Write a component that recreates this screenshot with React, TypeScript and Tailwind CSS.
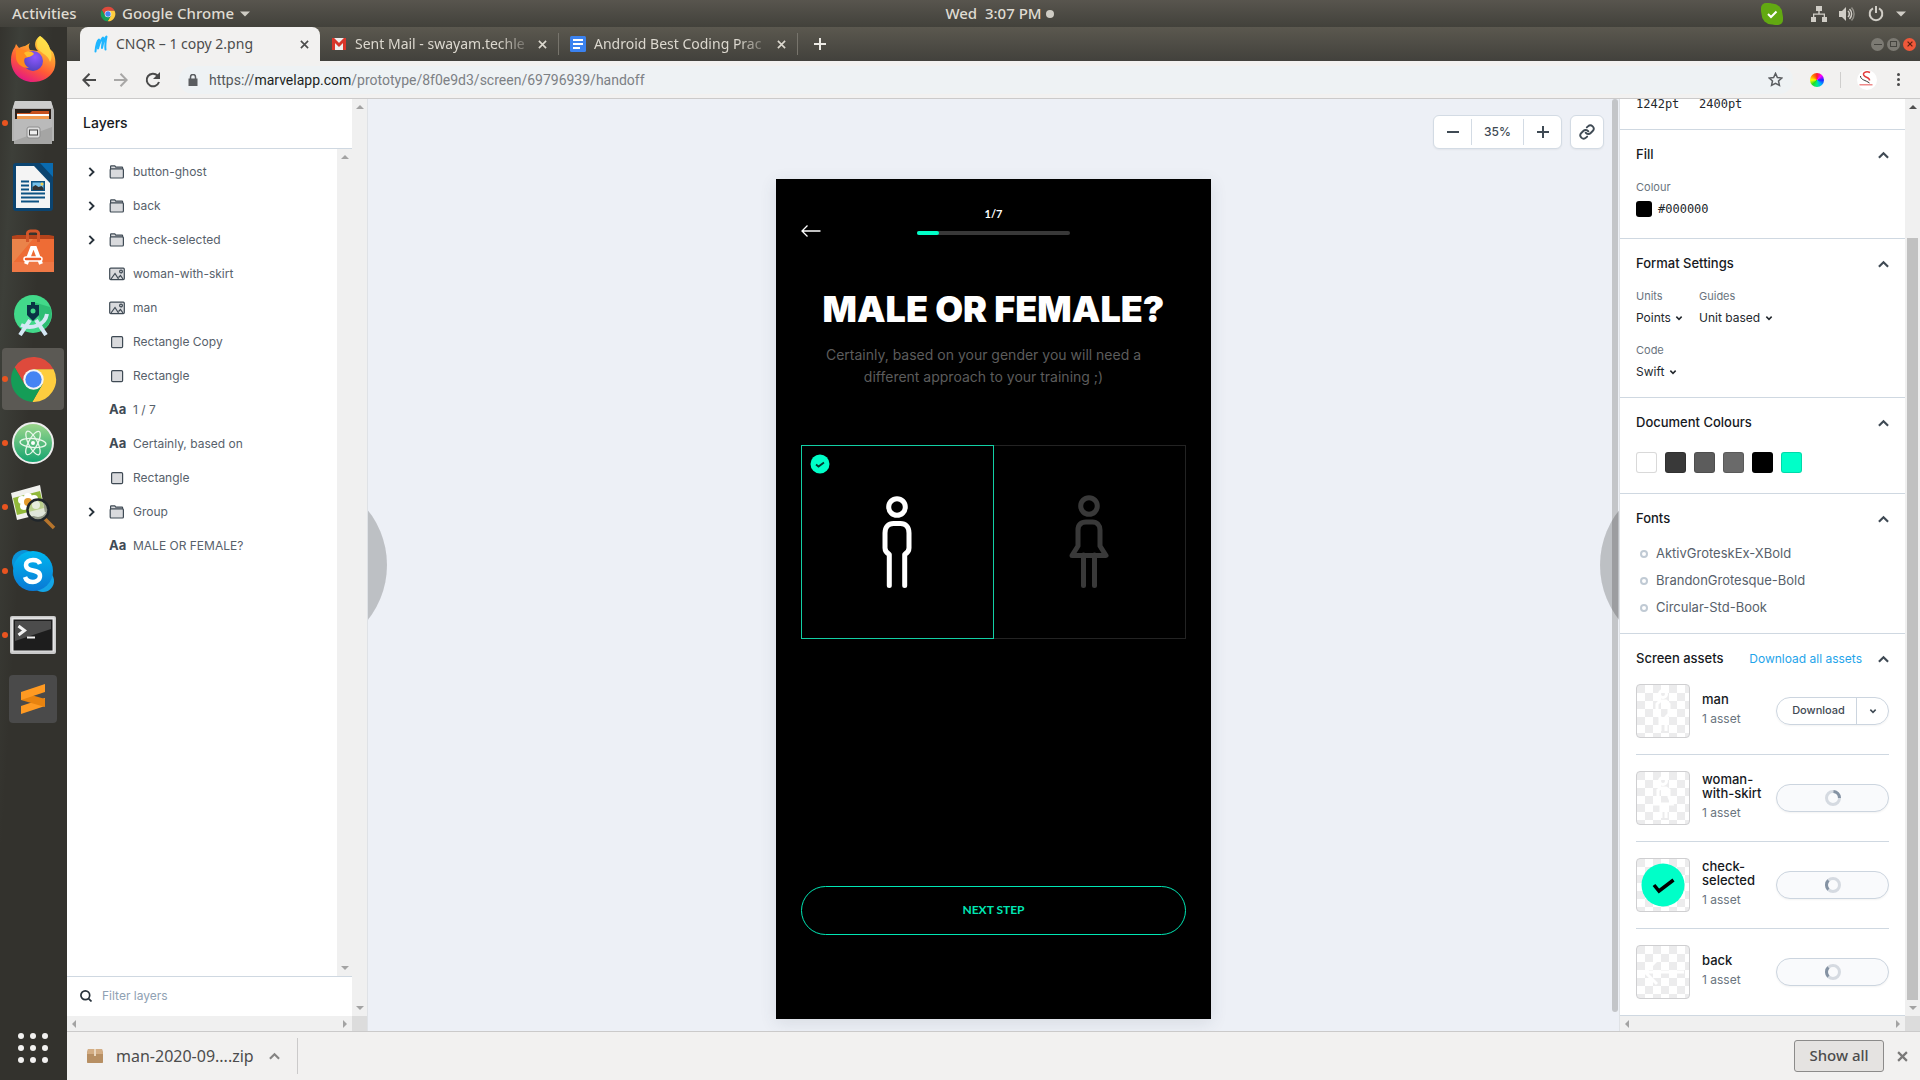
import React from "react";

type Kids = { children?: React.ReactNode; className?: string };

/* ---------- shared icons ---------- */

function ChromeLogo({ className }: { className: string }) {
  return (
    <svg viewBox="0 0 48 48" className={className} aria-hidden="true">
      <path d="M5.54 12.03A22 22 0 0 1 43.6 14H24L15.34 29Z" fill="#de4a3c" />
      <path d="M43.6 14A22 22 0 0 1 22.86 45.97L32.66 29 24 14Z" fill="#fecd3f" />
      <path d="M22.86 45.97A22 22 0 0 1 5.54 12.03L15.34 29H32.66Z" fill="#159d57" />
      <circle cx="24" cy="24" r="10" fill="#f4f4f4" />
      <circle cx="24" cy="24" r="8" fill="#4484f3" />
    </svg>
  );
}

function Cross({ className, width = 2 }: { className: string; width?: number }) {
  return (
    <svg viewBox="0 0 10 10" className={className} fill="none" stroke="currentColor" strokeWidth={width} aria-hidden="true">
      <path d="M1 1l8 8M9 1L1 9" />
    </svg>
  );
}

function Chevron({ dir, className }: { dir: "up" | "down" | "right"; className: string }) {
  const d = dir === "up" ? "M1 8.500L6 3.500l5 5" : dir === "down" ? "M2 4l4 4 4-4" : "M4 1l5 5-5 5";
  return (
    <svg viewBox="0 0 12 12" className={className} fill="none" stroke="currentColor" strokeWidth="2.300" aria-hidden="true">
      <path d={d} />
    </svg>
  );
}

function Caret({ dir, className }: { dir: "up" | "down" | "left" | "right"; className: string }) {
  const d = { up: "M0 6L4 2l4 4z", down: "M0 2l4 4 4-4z", left: "M6 0L2 4l4 4z", right: "M2 0l4 4-4 4z" }[dir];
  return (
    <svg viewBox="0 0 8 8" className={className} fill="currentColor" aria-hidden="true">
      <path d={d} />
    </svg>
  );
}

/* ---------- desktop top bar ---------- */

function TopBar() {
  return (
    <header className="grid h-[27px] shrink-0 grid-cols-[67px_1fr_auto_1fr] items-center bg-linear-to-b from-[#58554e] to-[#42413b] text-[15px] font-medium text-[#dfdbd2]">
      <div className="col-span-2 flex items-center pl-3">
        <button className="w-[88px] text-left">Activities</button>
        <button className="flex items-center gap-[6px]">
          <ChromeLogo className="size-[16px]" />
          <span>Google Chrome</span>
          <Caret dir="down" className="size-[10px] text-[#cfccc4]" />
        </button>
      </div>
      <button className="flex items-center gap-1 pl-3 whitespace-pre">
        Wed  3:07 PM
        <span className="size-2 rounded-full bg-[#cfccc4]" />
      </button>
      <div className="flex items-center justify-end pr-[14px] text-[#d0cdc6]">
        <svg viewBox="0 0 22 22" className="mr-[28px] size-[22px]" aria-hidden="true">
          <rect x="0" y="0" width="13" height="13" rx="5" fill="#62a912" />
          <rect x="9" y="9" width="13" height="13" rx="5" fill="#62a912" />
          <circle cx="11" cy="11" r="10.500" fill="#62a912" />
          <path d="M7 11l3 3 5.500-5.500" fill="none" stroke="#fff" strokeWidth="2" />
        </svg>
        <svg viewBox="0 0 16 16" className="mr-[12px] size-4" fill="currentColor" aria-hidden="true">
          <path d="M5 0h6v5H8.700v2.500H14V11h2v5h-5v-5h1.700V8.800H3.300V11H5v5H0v-5h2V7.500h5.300V5H5z" />
        </svg>
        <svg viewBox="0 0 16 16" className="mr-[13px] size-4" fill="none" stroke="currentColor" aria-hidden="true">
          <path d="M0 5h3l4-4v14l-4-4H0z" fill="currentColor" stroke="none" />
          <path d="M9 5a4 4 0 0 1 0 6M10.500 3a7 7 0 0 1 0 10" strokeWidth="1.500" />
          <path d="M12.500 1.500a9.500 9.500 0 0 1 0 13" strokeWidth="1.500" opacity="0.500" />
        </svg>
        <svg viewBox="0 0 16 16" className="mr-[12px] size-4" fill="none" stroke="currentColor" strokeWidth="2" aria-hidden="true">
          <path d="M5 2.300a6.300 6.300 0 1 0 6 0M8 0v7" />
        </svg>
        <Caret dir="down" className="size-[10px]" />
      </div>
    </header>
  );
}

/* ---------- dock ---------- */

const dockIcons: { name: string; running: boolean; active?: boolean; art: React.ReactNode }[] = [
  {
    name: "Firefox",
    running: false,
    art: (
      <svg viewBox="0 0 46 46" className="size-[46px]">
        <defs>
          <linearGradient id="ffo" x1="0.8" y1="0" x2="0.3" y2="1">
            <stop offset="0" stopColor="#fff44f" />
            <stop offset="0.35" stopColor="#ffa030" />
            <stop offset="0.65" stopColor="#ff5a36" />
            <stop offset="1" stopColor="#e31587" />
          </linearGradient>
          <radialGradient id="ffp" cx="0.6" cy="0.3" r="0.8">
            <stop offset="0" stopColor="#9059ff" />
            <stop offset="1" stopColor="#4a3fb8" />
          </radialGradient>
        </defs>
        <path d="M30 0c6 4 9 9 10 13l3 3c3 6 3 13 1 18-4 8-12 12-21 12C10 46 1 36 1 24c0-5 1-9 4-13l1-3 3 4c2-1 4-2 6-2l5-3c-2 3-1 5 0 7l8 1c-5-5-3-12 2-15z" fill="url(#ffo)" />
        <circle cx="23" cy="25" r="10" fill="url(#ffp)" />
        <path d="M6 14c5-1 9 0 12 2l5 2c-2 3-5 3-8 4-2 3 0 8 4 10-8 0-13-5-13-11z" fill="#ff8a1f" />
        <path d="M14 17c3-2 8-2 10 1-2 2-4 3-7 3z" fill="#ffbd2e" />
        <path d="M30 0c6 4 9 9 10 13 2 5 2 10 0 13-2-9-13-9-13-17 0-4 1-7 3-9z" fill="#ffe14a" opacity="0.8" />
      </svg>
    ),
  },
  {
    name: "Files",
    running: true,
    art: (
      <svg viewBox="0 0 42 44" className="h-[44px] w-[42px]">
        <path d="M3 0h36l3 9v31H0V9z" fill="#b4b4b3" />
        <path d="M3 0h36l2 7H1z" fill="#cdcdcc" />
        <path d="M3 8h36v10H3z" fill="#2c211b" />
        <path d="M5 12h13l2-2h17v9H5z" fill="#c7501d" />
        <path d="M5 13h32v6H5z" fill="#fff" />
        <path d="M5 15h32v4H5z" fill="#f39a4e" />
        <path d="M2 18h38v25H2z" fill="#a5a5a4" />
        <path d="M2 18h38v8L2 40z" fill="#bababa" />
        <rect x="15" y="26" width="13" height="11" rx="2" fill="#dcdcdc" stroke="#8e8e8e" />
        <rect x="17.500" y="29" width="8" height="5" fill="#eee" stroke="#444" />
      </svg>
    ),
  },
  {
    name: "LibreOffice Writer",
    running: false,
    art: (
      <svg viewBox="0 0 40 48" className="h-[48px] w-[40px]">
        <path d="M3 0h37v45a3 3 0 0 1-3 3H3a3 3 0 0 1-3-3V3a3 3 0 0 1 3-3z" fill="#0b4470" />
        <path d="M27 0h13v14z" fill="#0a6bb0" />
        <path d="M3 3h18l16 17v25H3z" fill="#f4f4f4" />
        <path d="M8 18.500h8M8 22.500h8M8 26.500h8M8 30.500h24M8 34.500h24M8 38.500h18" stroke="#0d5384" strokeWidth="2" />
        <path d="M18 18h14v10H18z" fill="#0d5384" />
        <path d="M19.500 19.500h11v7h-11z" fill="#74c0ea" />
        <path d="M19.500 27v-3l3-2 3 2 3-1 2 2v2z" fill="#333" />
        <circle cx="29" cy="21" r="1.500" fill="#f5cf4f" />
      </svg>
    ),
  },
  {
    name: "Ubuntu Software",
    running: false,
    art: (
      <svg viewBox="0 0 42 44" className="h-[44px] w-[42px]">
        <path d="M0 7l5-1h32l5 1v4H0z" fill="#b5431b" />
        <path d="M0 10h42v33H0z" fill="#ee6c35" />
        <path d="M0 10h21L0 35z" fill="#e98a50" opacity="0.8" />
        <path d="M0 33h42v10H0z" fill="#f08050" opacity="0.6" />
        <path d="M15.500 13V6a3 3 0 0 1 3-4h5a3 3 0 0 1 3 4v7" fill="none" stroke="#d3562a" strokeWidth="3" />
        <path d="M14 35l6-16h3l6 16" fill="none" stroke="#fff" strokeWidth="4" />
        <rect x="12" y="28" width="18" height="4" rx="2" fill="#ee5a28" stroke="#fff" strokeWidth="1.500" />
      </svg>
    ),
  },
  {
    name: "Android Studio",
    running: false,
    art: (
      <svg viewBox="0 0 42 42" className="size-[42px]">
        <circle cx="21" cy="20" r="19" fill="#42d98a" />
        <path d="M21 8l17 5a19 19 0 0 1-6 22z" fill="#2ebd74" />
        <path d="M18 26L8 41M24 26l10 15" stroke="#d5e8f5" strokeWidth="4" />
        <path d="M9 31c11 5 24 0 26-11" fill="none" stroke="#d5e8f5" strokeWidth="4" />
        <path d="M19 8h4v3h4v10l-6 6-6-6V11h4z" fill="#0a3345" />
        <circle cx="21" cy="17" r="2.500" fill="#42d98a" />
      </svg>
    ),
  },
  { name: "Google Chrome", running: true, active: true, art: <ChromeLogo className="size-[49px]" /> },
  {
    name: "Atom",
    running: true,
    art: (
      <svg viewBox="0 0 42 42" className="size-[42px]">
        <defs>
          <linearGradient id="atm" x1="0" y1="0" x2="0" y2="1">
            <stop offset="0" stopColor="#9fd78c" />
            <stop offset="1" stopColor="#12a36f" />
          </linearGradient>
        </defs>
        <circle cx="21" cy="21" r="20" fill="url(#atm)" stroke="#ededed" strokeWidth="2" />
        <g fill="none" stroke="#e8f7ea" strokeWidth="1.300">
          <ellipse cx="21" cy="21" rx="13" ry="4.500" transform="rotate(5 21 21)" />
          <ellipse cx="21" cy="21" rx="13" ry="4.500" transform="rotate(63 21 21)" />
          <ellipse cx="21" cy="21" rx="13" ry="4.500" transform="rotate(118 21 21)" />
        </g>
        <circle cx="21" cy="21" r="2" fill="#fff" />
      </svg>
    ),
  },
  {
    name: "Image Viewer",
    running: true,
    art: (
      <svg viewBox="0 0 46 46" className="size-[46px]">
        <path d="M1 9L30 1l5 28L7 36z" fill="#f1f1ee" />
        <path d="M3 14l27-7 4 17-27 7z" fill="#91b83a" />
        <g fill="#fff">
          <circle cx="12" cy="16" r="4" /><circle cx="18" cy="13" r="4" /><circle cx="24" cy="15" r="4" />
          <circle cx="26" cy="21" r="4" /><circle cx="14" cy="22" r="4" />
        </g>
        <circle cx="18" cy="18" r="4" fill="#e2992c" />
        <path d="M34 34l10 10" stroke="#b7752c" strokeWidth="3.500" />
        <circle cx="28" cy="26" r="10.500" fill="#d6dfc4" fillOpacity="0.6" stroke="#20262b" strokeWidth="2.500" />
        <path d="M20 28a9 9 0 0 0 16 0z" fill="#dfe5da" />
      </svg>
    ),
  },
  {
    name: "Skype",
    running: true,
    art: (
      <svg viewBox="0 0 42 42" className="size-[42px]">
        <defs>
          <linearGradient id="sky" x1="0" y1="0" x2="0" y2="1">
            <stop offset="0" stopColor="#00b7f0" />
            <stop offset="1" stopColor="#0a78d4" />
          </linearGradient>
        </defs>
        <circle cx="12" cy="12" r="12" fill="#0a93d8" />
        <circle cx="31" cy="31" r="11" fill="#14a5e6" />
        <circle cx="21" cy="21" r="20" fill="url(#sky)" />
        <path d="M28 14c-1-3-4-4-7-4-4 0-7 2-7 5 0 8 14 3 14 11 0 4-4 6-7 6-4 0-7-2-8-5" fill="none" stroke="#fff" strokeWidth="4.500" />
      </svg>
    ),
  },
  {
    name: "Terminal",
    running: true,
    art: (
      <svg viewBox="0 0 46 38" className="h-[38px] w-[46px]">
        <rect width="46" height="38" rx="2" fill="#c9c9c9" />
        <rect x="1.500" y="1.500" width="43" height="34" fill="#e6e6e6" />
        <rect x="3.500" y="3.500" width="39" height="31" fill="#1d1d1d" />
        <path d="M5 5h36v8L5 25z" fill="#4c4c4c" />
        <path d="M8.500 10l6 4.500-6 4.500" fill="none" stroke="#f2f2f2" strokeWidth="3" />
        <path d="M17 21.500h8" stroke="#f2f2f2" strokeWidth="2" />
      </svg>
    ),
  },
  {
    name: "Sublime Text",
    running: false,
    art: (
      <svg viewBox="0 0 48 48" className="size-[48px]">
        <rect width="48" height="48" rx="4" fill="#4a4a4a" />
        <path d="M12 31l24-8v8l-24 8z" fill="#ff9a22" />
        <path d="M12 17v8l24 7v-8z" fill="#e8830f" />
        <path d="M12 17l24-8v8l-24 8z" fill="#ff9a22" />
      </svg>
    ),
  },
];

function Dock() {
  return (
    <nav aria-label="Dock" className="flex w-[67px] shrink-0 flex-col justify-between bg-linear-to-br from-[#34332e] via-[#3d3f39] via-15% to-[#33322d] to-40% pt-px">
      <ul className="flex flex-col gap-[2px]">
        {dockIcons.map((i) => (
          <li key={i.name} className="relative flex justify-center pr-px">
            {i.running && <span className="absolute top-[28px] left-[2px] size-[6px] rounded-full bg-[#e95420]" />}
            <button aria-label={i.name} className={i.active ? "flex size-[62px] items-center justify-center rounded bg-[#5b5954]" : "flex size-[62px] items-center justify-center"}>
              {i.art}
            </button>
          </li>
        ))}
      </ul>
      <button aria-label="Show applications" className="mr-px mb-[17px] grid grid-cols-3 gap-[6px] self-center">
        {Array.from({ length: 9 }, (_, k) => (
          <span key={k} className="size-[6px] rounded-full bg-[#f2f1f0]" />
        ))}
      </button>
    </nav>
  );
}

/* ---------- browser chrome ---------- */

function TabStrip() {
  return (
    <div className="flex h-[34px] shrink-0 items-center bg-linear-to-b from-[#5b584f] to-[#42413c] pl-[13px] text-sm text-[#dcd8cf]">
      <div className="flex h-full w-[240px] items-center rounded-t-lg bg-[#f2f1f0] pr-2 pl-[14px] text-[#4c4c4c]">
        <svg viewBox="0 0 14 18" className="mr-2 h-[18px] w-[14px]" fill="none" stroke="#1fb6ff" strokeWidth="2" strokeLinecap="round" strokeLinejoin="round" aria-hidden="true">
          <path d="M1.500 16.500C2 11 3 6 5 4.500c0 3-1 6-1 9C5 10 7 4 9 2.500c0 4-1 7-1 10.500C9 8 10.500 3 12.500 1.500c-1 5-1.500 9-1 13" />
        </svg>
        <span className="flex-1 whitespace-nowrap">CNQR – 1 copy 2.png</span>
        <button aria-label="Close tab" className="p-[3px]"><Cross className="size-[9px]" width={1.8} /></button>
      </div>
      <div className="flex w-[239px] items-center border-r border-[#77746c] py-[1px] pr-2 pl-3">
        <svg viewBox="0 0 14 12" className="mr-[9px] h-3 w-[14px]" aria-hidden="true">
          <path d="M0 0h14v12H0z" fill="#eee" />
          <path d="M1.500 12V1.500L7 7l5.500-5.500V12" fill="none" stroke="#d8352a" strokeWidth="3" />
        </svg>
        <span className="flex-1 whitespace-nowrap mask-r-from-80%">Sent Mail - swayam.techle</span>
        <button aria-label="Close tab" className="p-[3px]"><Cross className="size-[9px]" width={1.8} /></button>
      </div>
      <div className="flex w-[239px] items-center border-r border-[#77746c] py-[1px] pr-2 pl-[11px]">
        <svg viewBox="0 0 16 16" className="mr-2 size-4" aria-hidden="true">
          <rect width="16" height="16" rx="1.500" fill="#3b82f0" />
          <path d="M3 4h10M3 8h10M3 12h7" stroke="#fff" strokeWidth="2" />
        </svg>
        <span className="flex-1 whitespace-nowrap mask-r-from-80%">Android Best Coding Prac</span>
        <button aria-label="Close tab" className="p-[3px]"><Cross className="size-[9px]" width={1.8} /></button>
      </div>
      <button aria-label="New tab" className="ml-4">
        <svg viewBox="0 0 12 12" className="size-3" stroke="#eceae5" strokeWidth="2" aria-hidden="true"><path d="M6 0v12M0 6h12" /></svg>
      </button>
      <div className="ml-auto flex gap-[3px] pr-1">
        <button aria-label="Minimise" className="flex size-[13px] items-center justify-center rounded-full bg-[#7c7a73]">
          <span className="h-px w-2 bg-[#45443f]" />
        </button>
        <button aria-label="Maximise" className="flex size-[13px] items-center justify-center rounded-full bg-[#7c7a73]">
          <span className="h-[6px] w-[7px] border border-[#45443f]" />
        </button>
        <button aria-label="Close window" className="flex size-[13px] items-center justify-center rounded-full bg-[#f0583a] text-[#5a2012]">
          <Cross className="size-[6px]" width={2} />
        </button>
      </div>
    </div>
  );
}

function Toolbar() {
  return (
    <div className="flex h-[38px] shrink-0 items-center border-b border-[#cbcaca] bg-[#f2f1f0] pr-5 pl-[15px] text-[#4a4a4a]">
      <button aria-label="Back" className="mr-[18px]">
        <svg viewBox="0 0 14 14" className="size-[14px]" fill="none" stroke="currentColor" strokeWidth="2"><path d="M14 7H1.500M7.500 .8L1.300 7l6.200 6.200" /></svg>
      </button>
      <button aria-label="Forward" className="mr-[17px] text-[#a8a7a6]">
        <svg viewBox="0 0 14 14" className="size-[14px]" fill="none" stroke="currentColor" strokeWidth="2"><path d="M0 7h12.500M6.500 .8L12.700 7l-6.200 6.200" /></svg>
      </button>
      <button aria-label="Reload">
        <svg viewBox="0 0 16 16" className="size-[16px]" fill="none" stroke="currentColor" strokeWidth="2">
          <path d="M14 10a6.300 6.300 0 1 1-1.500-6.500" />
          <path d="M15 0v7H8z" fill="currentColor" stroke="none" />
        </svg>
      </button>
      <div className="ml-[18px] flex h-[28px] flex-1 items-center rounded-full bg-[#eef2f4] pr-[10px] pl-[9px] font-['Roboto',sans-serif] text-sm">
        <svg viewBox="0 0 10 12" className="mr-[11px] h-3 w-[10px] text-[#5a5d60]" aria-hidden="true">
          <path d="M0.500 4.500h9V12h-9z" fill="currentColor" />
          <path d="M2.500 5V3a2.500 2.500 0 0 1 5 0v2" fill="none" stroke="currentColor" strokeWidth="1.500" />
        </svg>
        <a href="#address" className="flex-1 text-[#7c8084]">
          <span className="text-[#55585b]">https://</span><span className="text-[#1c1f22]">marvelapp.com</span>/prototype/8f0e9d3/screen/69796939/handoff
        </a>
        <button aria-label="Bookmark">
          <svg viewBox="0 0 16 16" className="size-[15px]" fill="none" stroke="#5a5d60" strokeWidth="1.600"><path d="M8 1.500l2 4.400 4.700.5-3.500 3.200 1 4.700L8 12l-4.200 2.300 1-4.700L1.300 6.400 6 5.900z" /></svg>
        </button>
      </div>
      <button aria-label="Colour picker extension" className="ml-[17px] size-[14px] rounded-full bg-[conic-gradient(#f22,#f0f,#22f,#0af,#0e8,#2d2,#ff0,#f80,#f22)]" />
      <span className="mx-[16px] h-4 w-px bg-[#cfcecd]" />
      <button aria-label="Profile" className="size-5 overflow-hidden rounded-full bg-white">
        <svg viewBox="0 0 20 20" className="size-5" fill="none">
          <path d="M13 2.500C9 .5 5 3 7 5.500s6 2 5.500 5" stroke="#e33b3b" strokeWidth="1.500" />
          <path d="M3.500 6c0 4 5 4 9 7" stroke="#333" strokeWidth="1" />
          <path d="M2.500 14.800h13" stroke="#ee8a8a" strokeWidth="1.500" />
        </svg>
      </button>
      <button aria-label="Menu" className="ml-5 flex flex-col gap-[2px]">
        <span className="size-[3px] rounded-full bg-[#4a4a4a]" />
        <span className="size-[3px] rounded-full bg-[#4a4a4a]" />
        <span className="size-[3px] rounded-full bg-[#4a4a4a]" />
      </button>
    </div>
  );
}

/* ---------- scroll bars ---------- */

function VBar() {
  return (
    <div aria-hidden="true" className="flex w-[15px] shrink-0 flex-col items-center justify-between bg-[#f0f0f0] py-1 text-[#a3a3a3]">
      <Caret dir="up" className="size-2" />
      <Caret dir="down" className="size-2" />
    </div>
  );
}

function HBar() {
  return (
    <div aria-hidden="true" className="flex h-[15px] shrink-0 bg-[#f0f0f0] text-[#a3a3a3]">
      <div className="flex flex-1 items-center justify-between px-[3px]">
        <Caret dir="left" className="size-2" />
        <Caret dir="right" className="size-2" />
      </div>
      <div className="w-[15px] bg-[#dcdcdc]" />
    </div>
  );
}

/* ---------- layers panel ---------- */

const layers: { kind: "folder" | "image" | "shape" | "text"; name: string }[] = [
  { kind: "folder", name: "button-ghost" },
  { kind: "folder", name: "back" },
  { kind: "folder", name: "check-selected" },
  { kind: "image", name: "woman-with-skirt" },
  { kind: "image", name: "man" },
  { kind: "shape", name: "Rectangle Copy" },
  { kind: "shape", name: "Rectangle" },
  { kind: "text", name: "1 / 7" },
  { kind: "text", name: "Certainly, based on" },
  { kind: "shape", name: "Rectangle" },
  { kind: "folder", name: "Group" },
  { kind: "text", name: "MALE OR FEMALE?" },
];

function LayerIcon({ kind }: { kind: string }) {
  if (kind === "text") return <span className="text-[13px] font-bold text-[#3f4a54]">Aa</span>;
  return (
    <svg viewBox="0 0 16 14" className="h-[14px] w-4" fill="#d9dadd" stroke="#3f4a54" strokeWidth="1.200" aria-hidden="true">
      {kind === "folder" && (
        <>
          <path d="M1.600 4V1.500a.6.6 0 0 1 .6-.6h3.600l1 1.200h6.200a.6.6 0 0 1 .6.6V4" />
          <rect x="1.200" y="3.800" width="13.200" height="9.200" rx="1" />
        </>
      )}
      {kind === "image" && (
        <>
          <rect x="0.700" y="1.200" width="14.600" height="11.400" rx="1" />
          <path d="M2 12l4-5.500L9.500 12M9.500 10.500l2-2 2.500 3.500" />
          <circle cx="12" cy="4.500" r="1.400" />
        </>
      )}
      {kind === "shape" && <rect x="2.600" y="1.600" width="11" height="11" rx="1.200" />}
    </svg>
  );
}

function LayersPanel() {
  return (
    <aside className="flex w-[301px] shrink-0 flex-col border-r border-[#dfe2e6] font-['Inter',sans-serif]">
      <div className="flex min-h-0 flex-1">
        <div className="flex min-w-0 flex-1 flex-col bg-white">
          <h2 className="flex h-[50px] shrink-0 items-center border-b border-[#cfd8e1] px-4 pb-[2px] text-sm font-medium text-[#16191d]">Layers</h2>
          <div className="flex min-h-0 flex-1">
            <ul className="flex-1 pt-[6px]">
              {layers.map((l, i) => (
                <li key={i}>
                  <button className="flex h-[34px] w-full items-center text-left text-xs text-[#57616b]">
                    <span className="ml-[19px] w-[23px]">
                      {l.kind === "folder" && <Chevron dir="right" className="size-[10px] text-[#28323b]" />}
                    </span>
                    <span className="flex w-6 items-center"><LayerIcon kind={l.kind} /></span>
                    <span>{l.name}</span>
                  </button>
                </li>
              ))}
            </ul>
            <VBar />
          </div>
          <label className="flex h-[40px] shrink-0 items-center gap-[10px] border-t border-[#cfd8e1] pb-px pl-[13px]">
            <svg viewBox="0 0 12 12" className="size-3" fill="none" stroke="#28323b" strokeWidth="1.700" aria-hidden="true">
              <circle cx="5.300" cy="5.300" r="4.400" />
              <path d="M8.300 8.300l3.200 3.200" />
            </svg>
            <input type="text" aria-label="Filter layers" placeholder="Filter layers" className="min-w-0 flex-1 bg-transparent text-xs outline-none placeholder:text-[#8fa1b3]" />
          </label>
        </div>
        <VBar />
      </div>
      <HBar />
    </aside>
  );
}

/* ---------- canvas ---------- */

function Screen() {
  return (
    <article className="mx-auto flex h-[840px] w-[435px] shrink-0 flex-col bg-black px-[25px] shadow-[0_4px_16px_rgba(60,70,90,0.12)]">
      <div className="mt-7 grid grid-cols-[1fr_153px_1fr] items-end">
        <svg viewBox="0 0 20 12" className="h-3 w-5" fill="none" stroke="#fff" strokeWidth="1.300" aria-hidden="true">
          <path d="M19.500 6H1M6.500 .5L1 6l5.500 5.500" />
        </svg>
        <div className="pb-[2px]">
          <p className="text-center font-['Lato',sans-serif] text-[11px] leading-[14px] font-bold text-white">1/7</p>
          <div className="mt-[10px] h-1 rounded-full bg-[#383838]">
            <div className="h-1 w-[22px] rounded-full bg-[#00ffc8]" />
          </div>
        </div>
      </div>
      <h1 className="mt-[52px] text-center font-['Inter',sans-serif] text-[36px] leading-10 font-black whitespace-nowrap text-white">MALE OR FEMALE?</h1>
      <p className="mt-[15px] pr-5 text-center font-['Inter',sans-serif] text-sm leading-[22px] text-[#5c5c5c]">
        Certainly, based on your gender you will need a<br />different approach to your training ;)
      </p>
      <div className="mt-[57px] grid grid-cols-2">
        <button aria-label="Male" className="relative flex h-[194px] items-center justify-center border border-[#12cfa5]">
          <svg viewBox="0 0 20 20" className="absolute top-[8px] left-[8px] size-5" aria-hidden="true">
            <circle cx="10" cy="10" r="9.500" fill="#00ffc8" />
            <path d="M6 10.500l2.500 2 5.500-4" fill="none" stroke="#04382e" strokeWidth="1.800" />
          </svg>
          <svg viewBox="0 0 32 94" className="h-[94px] w-8" fill="none" stroke="#fff" strokeWidth="5" strokeLinecap="round" strokeLinejoin="round" aria-hidden="true">
            <circle cx="16" cy="12" r="8.300" />
            <path d="M8.300 90.500V59.500C5 57.500 4 56 4 53V38c0-6 3.500-9.500 8.500-9.500h7C24.500 28.500 28 32 28 38v15c0 3-1 4.500-4.300 6.500v31" />
          </svg>
        </button>
        <button aria-label="Female" className="flex h-[194px] items-center justify-center border border-l-0 border-[#232323]">
          <svg viewBox="0 0 40 94" className="h-[94px] w-10" fill="none" stroke="#393939" strokeWidth="5" strokeLinecap="round" strokeLinejoin="round" aria-hidden="true">
            <circle cx="20" cy="11" r="8.300" />
            <path d="M14.500 60v30.500M25.500 60v30.500M17 27h6.500c4.500 0 7.500 3 7.500 8v16l6 9.500H3L9 51V35c0-5 3-8 8-8z" />
          </svg>
        </button>
      </div>
      <button className="mt-[247px] flex h-[49px] items-center justify-center rounded-full border border-[#00e6b4] pb-[2px] font-['Lato',sans-serif] text-xs font-bold text-[#00e6b4]">NEXT STEP</button>
    </article>
  );
}

function Canvas() {
  return (
    <main className="relative flex min-w-0 flex-1 overflow-hidden bg-[#edf0f6] font-['Inter',sans-serif]">
      <div className="flex min-w-0 flex-1 flex-col">
        <div className="flex h-20 shrink-0 items-start justify-end gap-2 pt-4 pr-2 text-[#3f4a54]">
          <div className="flex h-[34px] items-center rounded-md border border-[#d3dbe4] bg-white shadow-xs">
            <button aria-label="Zoom out" className="flex w-[37px] justify-center">
              <svg viewBox="0 0 12 12" className="size-3" stroke="currentColor" strokeWidth="2"><path d="M0 6h12" /></svg>
            </button>
            <span className="flex h-[26px] w-[53px] items-center justify-center border-x border-[#d3dbe4] text-xs font-medium">35%</span>
            <button aria-label="Zoom in" className="flex w-[37px] justify-center">
              <svg viewBox="0 0 12 12" className="size-3" stroke="currentColor" strokeWidth="2"><path d="M0 6h12M6 0v12" /></svg>
            </button>
          </div>
          <button aria-label="Copy link" className="flex size-[34px] items-center justify-center rounded-md border border-[#d3dbe4] bg-white shadow-xs">
            <svg viewBox="0 0 24 24" className="size-4" fill="none" stroke="currentColor" strokeWidth="2.800" strokeLinecap="round" strokeLinejoin="round">
              <path d="M10 13a5 5 0 0 0 7.540.54l3-3a5 5 0 0 0-7.070-7.070l-1.720 1.710" />
              <path d="M14 11a5 5 0 0 0-7.540-.54l-3 3a5 5 0 0 0 7.070 7.070l1.710-1.710" />
            </svg>
          </button>
        </div>
        <div className="flex pl-[7px]"><Screen /></div>
      </div>
      <div aria-hidden="true" className="mr-px mb-[19px] w-[6px] rounded-full bg-[#c3c5c8]" />
      <button aria-label="Previous screen" className="absolute top-[378px] -left-[157px] size-[176px] rounded-full bg-black/20" />
      <button aria-label="Next screen" className="absolute top-[378px] -right-[157px] size-[176px] rounded-full bg-black/20" />
    </main>
  );
}

/* ---------- inspector ---------- */

function Section({ title, action, className, children }: Kids & { title: string; action?: React.ReactNode }) {
  return (
    <section className={`border-b border-[#cfd8e1] px-4 pt-[15px] ${className}`}>
      <div className="flex h-5 items-center">
        <h3 className="flex-1 text-[13px] font-medium whitespace-nowrap text-[#16191d]">{title}</h3>
        {action}
        <button aria-label={`Collapse ${title}`} className="ml-4"><Chevron dir="up" className="size-[11px] text-[#3f4a54]" /></button>
      </div>
      {children}
    </section>
  );
}

function Picker({ label, value }: { label: string; value: string }) {
  return (
    <label className="flex flex-col gap-[6px]">
      <span className="text-[11px] leading-4 text-[#6a747e]">{label}</span>
      <span className="flex items-center gap-1">
        <select className="h-4 appearance-none bg-transparent text-xs leading-4 text-[#23282d] outline-none">
          <option>{value}</option>
        </select>
        <Chevron dir="down" className="size-2 text-[#23282d]" />
      </span>
    </label>
  );
}

function Thumb({ kind }: { kind: string }) {
  return (
    <div className="flex size-[54px] shrink-0 items-center justify-center rounded border border-[#cfcfd1] bg-[conic-gradient(#fff_25%,#ececed_0_50%,#fff_0_75%,#ececed_0)] bg-size-[16px_16px]">
      <svg viewBox="0 0 44 44" className="size-11" fill="none" stroke="#fff" strokeWidth="3" aria-hidden="true">
        {kind === "check-selected" && (
          <>
            <circle cx="22" cy="22" r="21.500" fill="#00ffc8" stroke="none" />
            <path d="M13 22l5 6 14.500-11" stroke="#000" strokeWidth="3.500" />
          </>
        )}
        {kind === "man" && (
          <>
            <circle cx="22" cy="5" r="3.500" />
            <path d="M19 42V28l-3-3V15l3-3h6l3 3v10l-3 3v14" />
          </>
        )}
        {kind === "woman-with-skirt" && (
          <>
            <circle cx="22" cy="5" r="3.500" />
            <path d="M20 42V29M25 42V29M17 21v-7l3-2h5l3 2v7l3 7H14z" />
          </>
        )}
        {kind === "back" && <path d="M43 22H4M16 10L4 22l12 12" />}
      </svg>
    </div>
  );
}

function Spinner({ quarter }: { quarter: "right" | "left" }) {
  return (
    <svg viewBox="0 0 16 16" className="size-4" fill="none" strokeWidth="3" aria-hidden="true">
      <circle cx="8" cy="8" r="6.500" stroke="#d5dae1" />
      <path d={quarter === "right" ? "M8.500 1.500A6.500 6.500 0 0 1 14.500 8" : "M3.400 12.600A6.500 6.500 0 0 1 3.400 3.400"} stroke="#8492a3" />
    </svg>
  );
}

const assets = [
  { kind: "man", lines: ["man"], busy: null },
  { kind: "woman-with-skirt", lines: ["woman-", "with-skirt"], busy: "right" as const },
  { kind: "check-selected", lines: ["check-", "selected"], busy: "left" as const },
  { kind: "back", lines: ["back"], busy: "left" as const },
];

function Inspector() {
  return (
    <aside className="flex w-[301px] shrink-0 flex-col overflow-hidden border-l border-[#dfe2e6] bg-white font-['Inter',sans-serif]">
      <div className="flex min-h-0 flex-1">
        <div className="min-w-0 flex-1 overflow-hidden">
          <div className="flex h-[31px] border-b border-[#cfd8e1] px-4 font-['DejaVu_Sans_Mono',monospace] text-xs leading-4 text-[#23282d]">
            <span className="-mt-[3px] w-[63px]">1242pt</span>
            <span className="-mt-[3px]">2400pt</span>
          </div>
          <Section title="Fill" className="pb-[21px]">
            <p className="mt-[14px] text-[11px] leading-4 text-[#6a747e]">Colour</p>
            <div className="mt-[6px] flex items-center gap-[6px] font-['DejaVu_Sans_Mono',monospace] text-xs leading-4 text-[#23282d]">
              <span className="size-4 rounded-[3px] bg-black" />
              #000000
            </div>
          </Section>
          <Section title="Format Settings" className="pb-[17px]">
            <div className="mt-[14px] grid grid-cols-[63px_1fr] gap-y-4">
              <Picker label="Units" value="Points" />
              <Picker label="Guides" value="Unit based" />
              <Picker label="Code" value="Swift" />
            </div>
          </Section>
          <Section title="Document Colours" className="pb-5">
            <div className="mt-[19px] flex gap-2">
              <button aria-label="White" className="size-[21px] rounded-[3px] border border-black/15 bg-white" />
              <button aria-label="#393939" className="size-[21px] rounded-[3px] border border-black/15 bg-[#393939]" />
              <button aria-label="#5c5c5c" className="size-[21px] rounded-[3px] border border-black/15 bg-[#5c5c5c]" />
              <button aria-label="#6a6a6a" className="size-[21px] rounded-[3px] border border-black/15 bg-[#6a6a6a]" />
              <button aria-label="Black" className="size-[21px] rounded-[3px] border border-black/15 bg-black" />
              <button aria-label="#00ffc8" className="size-[21px] rounded-[3px] border border-black/15 bg-[#00ffc8]" />
            </div>
          </Section>
          <Section title="Fonts" className="pb-3">
            <ul className="mt-[11px] text-[13px] text-[#57616b]">
              {["AktivGroteskEx-XBold", "BrandonGrotesque-Bold", "Circular-Std-Book"].map((f) => (
                <li key={f} className="flex h-[27px] items-center gap-2 pl-1">
                  <span className="size-2 rounded-full border-2 border-[#c0cad4]" />
                  {f}
                </li>
              ))}
            </ul>
          </Section>
          <Section title="Screen assets" action={<a href="#assets" className="text-xs whitespace-nowrap text-[#1fa4ea]">Download all assets</a>} className="">
            <ul className="divide-y divide-[#cfd8e1]">
              {assets.map((a) => (
                <li key={a.kind} className="flex items-center py-4 first:pt-[15px]">
                  <Thumb kind={a.kind} />
                  <div className="ml-3 flex-1 pb-[3px]">
                    <h4 className="text-[13px] leading-[14px] font-medium whitespace-nowrap text-[#16191d]">
                      {a.lines.map((t) => <span key={t} className="block">{t}</span>)}
                    </h4>
                    <p className="mt-[5px] text-xs leading-4 text-[#6a747e]">1 asset</p>
                  </div>
                  {a.busy ? (
                    <button aria-label={`Downloading ${a.kind}`} className="flex h-7 w-[113px] items-center justify-center rounded-full border border-[#ccd5df] bg-[#f9fafc] shadow-xs">
                      <Spinner quarter={a.busy} />
                    </button>
                  ) : (
                    <div className="flex h-7 w-[113px] rounded-full border border-[#ccd5df] text-[#3f4a54] shadow-xs">
                      <button className="flex-1 pb-px pl-1 text-[11px] font-medium">Download</button>
                      <button aria-label="Download options" className="flex w-8 items-center justify-center border-l border-[#ccd5df]">
                        <Chevron dir="down" className="size-2" />
                      </button>
                    </div>
                  )}
                </li>
              ))}
            </ul>
          </Section>
        </div>
        <div aria-hidden="true" className="flex w-[15px] shrink-0 flex-col items-center bg-[#f0f0f0] py-1 text-[#a3a3a3]">
          <Caret dir="up" className="size-2 text-[#505050]" />
          <div className="mt-[127px] mb-1 w-[11px] flex-1 bg-[#c1c1c1]" />
          <Caret dir="down" className="size-2" />
        </div>
      </div>
      <HBar />
    </aside>
  );
}

/* ---------- download shelf ---------- */

function DownloadShelf() {
  return (
    <footer className="flex h-[49px] shrink-0 items-center border-t border-[#cbcaca] bg-[#f2f1f0] pr-3 pl-5 text-[#4c4c4c]">
      <button className="flex items-center">
        <svg viewBox="0 0 16 14" className="mr-[13px] h-[14px] w-4" aria-hidden="true">
          <path d="M1 0h14l1 4v9.300a.7.7 0 0 1-.7.7H.7a.7.7 0 0 1-.7-.7V4z" fill="#b78f63" />
          <path d="M1 0h14l1 5H0z" fill="#d3ad84" />
          <path d="M7 0h2v7H7z" fill="#ead6bd" />
        </svg>
        <span className="text-base">man-2020-09....zip</span>
      </button>
      <button aria-label="Download actions" className="ml-[15px] text-[#858483]"><Chevron dir="up" className="size-[11px]" /></button>
      <span className="ml-[17px] h-9 w-px bg-[#cbcaca]" />
      <button className="mb-px ml-auto h-8 w-[90px] rounded-[3px] border border-[#8c8b8a] bg-[#e5e3e1] text-[15px] font-medium">Show all</button>
      <button aria-label="Close downloads bar" className="ml-[13px] text-[#7a7978]"><Cross className="size-[11px]" width={2} /></button>
    </footer>
  );
}

export default function App() {
  return (
    <div className="flex h-screen flex-col overflow-hidden font-['Noto_Sans',sans-serif]">
      <TopBar />
      <div className="flex min-h-0 flex-1">
        <Dock />
        <div className="flex min-w-0 flex-1 flex-col">
          <TabStrip />
          <Toolbar />
          <div className="flex min-h-0 flex-1">
            <LayersPanel />
            <Canvas />
            <Inspector />
          </div>
          <DownloadShelf />
        </div>
      </div>
    </div>
  );
}
